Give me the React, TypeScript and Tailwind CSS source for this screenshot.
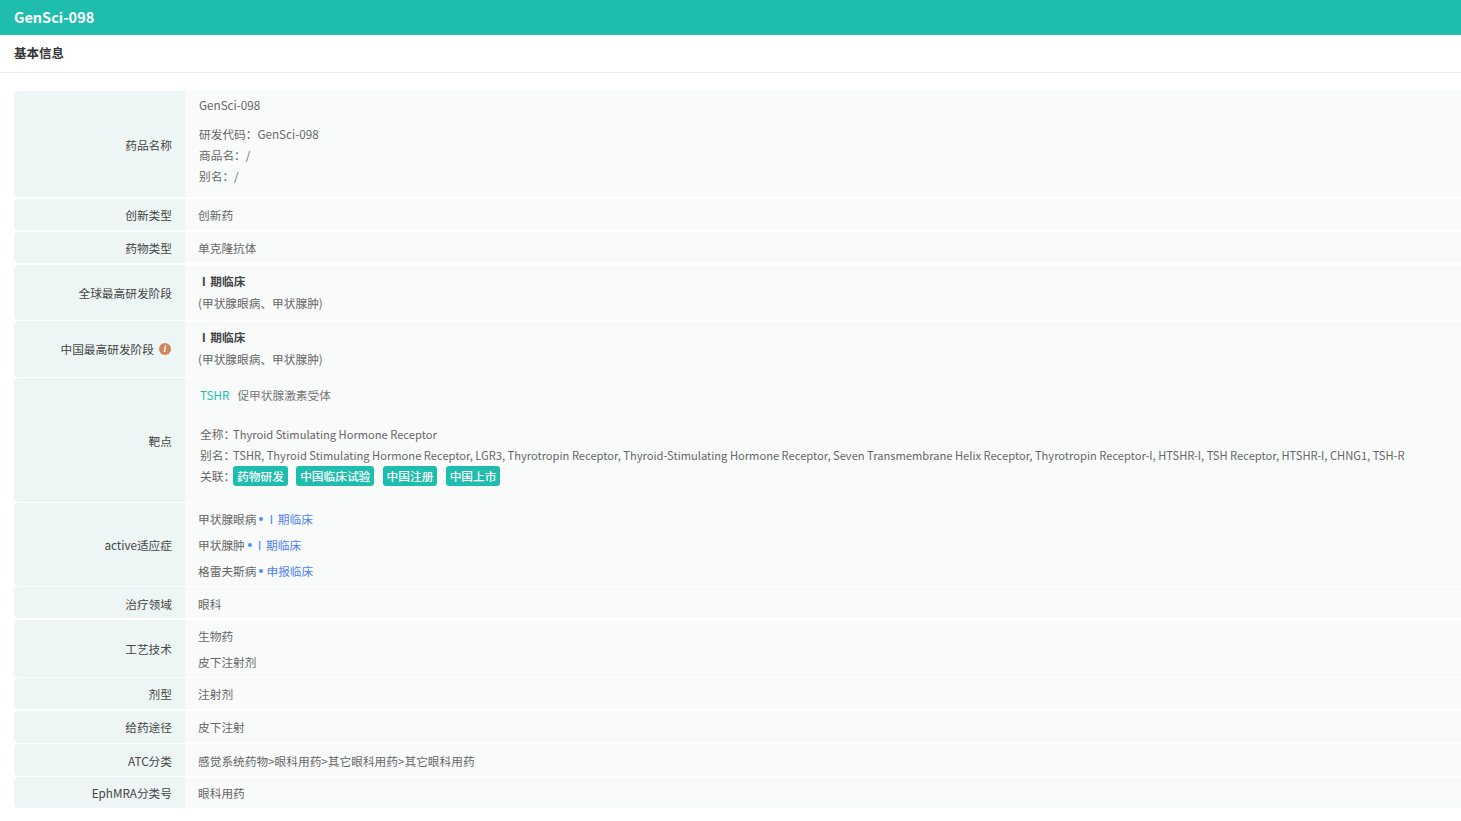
import type { ReactNode } from 'react';

interface RowProps {
  label: ReactNode;
  className: string;
  cellClass?: string;
  children: ReactNode;
}

function Row({ label, className, cellClass = '', children }: RowProps) {
  return (
    <div className={`flex ${className}`}>
      <div className={`w-[171px] shrink-0 flex items-center justify-end pr-[13px] bg-[#eef6f5] rounded-l-[4px] text-[#444] ${cellClass}`}>
        {label}
      </div>
      <div className={`flex-1 min-w-0 bg-[#f9fbfb] text-[#666] pl-[13px] flex flex-col justify-center ${cellClass}`}>
        {children}
      </div>
    </div>
  );
}

function PhaseOne() {
  return (
    <>
      <span className="ml-[-1px] mr-[-2px]">Ⅰ</span> 期临床
    </>
  );
}

function Stage() {
  return (
    <div className="pb-[2px]">
      <div className="font-bold text-[#444] leading-[22px] pl-px">
        <PhaseOne />
      </div>
      <div className="leading-[22px]">(甲状腺眼病、甲状腺肿)</div>
    </div>
  );
}

function Tag({ children }: { children: ReactNode }) {
  return (
    <span className="h-[20px] px-[4px] mr-[8.3px] inline-flex items-center rounded-[3px] bg-[#1fbdae] text-white font-medium">
      {children}
    </span>
  );
}

function Indication({ name, stage }: { name: string; stage: ReactNode }) {
  return (
    <div className="h-[26px] flex items-center">
      <span>{name}</span>
      <span className="mx-[3px] mt-px w-[4px] h-[4px] rounded-full bg-[#4f8ff7]" />
      <span className="text-[#4f7ff7]">{stage}</span>
    </div>
  );
}

export default function App() {
  return (
    <div className="min-h-[821px] bg-white text-[11.7px] font-['Noto_Sans_CJK_SC','Noto_Sans',sans-serif]">
      <div className="h-[35px] bg-[#1fbdae] flex items-center px-[14px] pb-px text-white text-[14.5px] font-bold">GenSci-098</div>
      <div className="h-[38px] flex items-center px-[14px] border-b border-[#e8e8e8] text-[12.5px] font-bold text-[#333]">基本信息</div>

      <div className="pl-[14px] pt-[18px] flex flex-col">
        <Row label={<span className="pt-[2px]">药品名称</span>} className="h-[106px] mb-[2px]">
          <div className="h-[28px] flex items-center pl-px border-b border-[#fdfefe]">GenSci-098</div>
          <div className="flex-1 pt-[4px] pl-px">
            <div className="leading-[21px]">研发代码：GenSci-098</div>
            <div className="leading-[21px]">商品名：/</div>
            <div className="leading-[21px]">别名：/</div>
          </div>
        </Row>
        <Row label="创新类型" className="h-[31px] mb-[2px]">创新药</Row>
        <Row label="药物类型" className="h-[31px] mb-[2px]">单克隆抗体</Row>
        <Row label="全球最高研发阶段" className="h-[55px] mb-px">
          <Stage />
        </Row>
        <Row
          label={
            <span className="flex items-center">
              中国最高研发阶段
              <span className="ml-[5px] mr-[1px] w-[12px] h-[12px] rounded-full bg-[#d0845c] text-white text-[10px] italic font-bold flex items-center justify-center font-['Liberation_Serif',serif]">i</span>
            </span>
          }
          className="h-[56px] mb-px"
        >
          <Stage />
        </Row>
        <Row label={<span className="pt-[2px]">靶点</span>} className="h-[124px] mb-px">
          <div className="h-[35px] flex items-center pl-[2px] border-b border-[#fdfefe]">
            <span className="text-[#1fbdae] mr-[8px]">TSHR</span>
            <span className="text-[#777]">促甲状腺激素受体</span>
          </div>
          <div className="flex-1 pt-[10px] pl-[2px]">
            <div className="leading-[21px]">全称：<span className="ml-[-2px] text-[11.15px]">Thyroid Stimulating Hormone Receptor</span></div>
            <div className="leading-[21px] mt-[-1px] whitespace-nowrap">
              别名：<span className="ml-[-2px] text-[11.15px]">TSHR, Thyroid Stimulating Hormone Receptor, LGR3, Thyrotropin Receptor, Thyroid-Stimulating Hormone Receptor, Seven Transmembrane Helix Receptor, Thyrotropin Receptor-I, HTSHR-I, TSH Receptor, HTSHR-I, CHNG1, TSH-R</span>
            </div>
            <div className="flex items-center h-[20px]">
              <span className="mr-[-2px]">关联：</span>
              <Tag>药物研发</Tag>
              <Tag>中国临床试验</Tag>
              <Tag>中国注册</Tag>
              <Tag>中国上市</Tag>
            </div>
          </div>
        </Row>
        <Row label="active适应症" className="h-[83px] mb-px">
          <Indication name="甲状腺眼病" stage={<PhaseOne />} />
          <Indication name="甲状腺肿" stage={<PhaseOne />} />
          <Indication name="格雷夫斯病" stage="申报临床" />
        </Row>
        <Row label="治疗领域" className="h-[31px] mb-[2px]" cellClass="pt-[2px]">眼科</Row>
        <Row label="工艺技术" className="h-[57px] mb-px">
          <div className="h-[26px] flex items-center">生物药</div>
          <div className="h-[26px] flex items-center">皮下注射剂</div>
        </Row>
        <Row label="剂型" className="h-[31px] mb-[2px]">注射剂</Row>
        <Row label="给药途径" className="h-[32px] mb-px">皮下注射</Row>
        <Row label="ATC分类" className="h-[32px] mb-px" cellClass="pt-[2px]">感觉系统药物&gt;眼科用药&gt;其它眼科用药&gt;其它眼科用药</Row>
        <Row label="EphMRA分类号" className="h-[31px]">眼科用药</Row>
      </div>
    </div>
  );
}
